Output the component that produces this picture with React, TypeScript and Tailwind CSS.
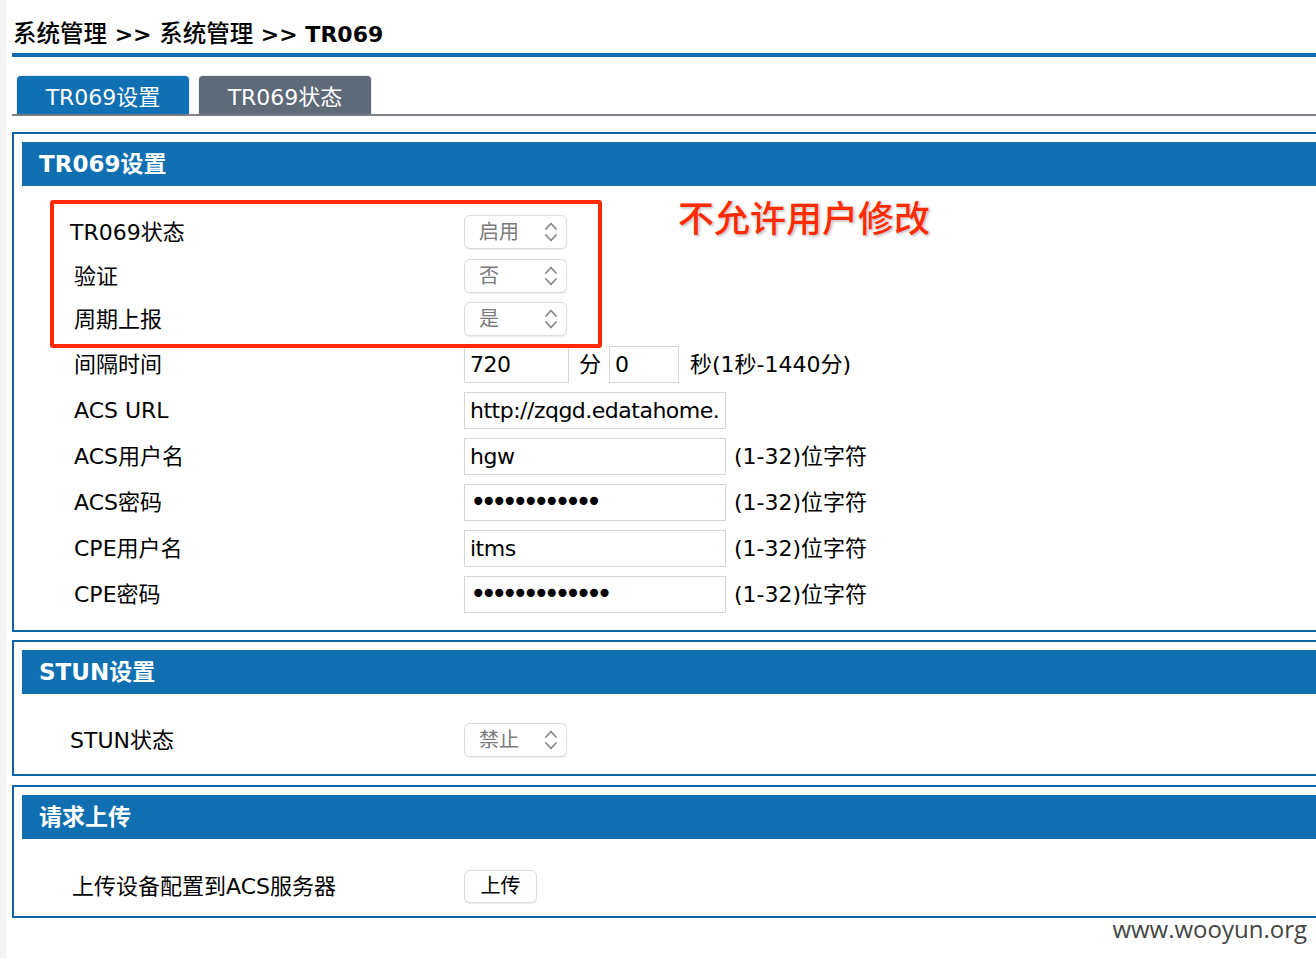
import type { ReactNode } from 'react'

const font = '"DejaVu Sans", "Noto Sans CJK SC", sans-serif'

function UpDown() {
    return (
        <svg width="14" height="24" viewBox="0 0 14 24" fill="none" stroke="#8a8a8a" strokeWidth="1.8" strokeLinecap="round" strokeLinejoin="round">
            <path d="M2 9 L7 3.5 L12 9" />
            <path d="M2 15 L7 20.5 L12 15" />
        </svg>
    )
}

function Select({ value }: { value: string }) {
    return (
        <div className="flex h-[34px] w-[103px] items-center justify-between rounded-[6px] border border-[#dcdcdc] bg-white pl-[14px] pr-[8px] text-[20px] text-[#7a7a7a] shadow-[0_1px_1px_rgba(0,0,0,0.08)]">
            <span>{value}</span>
            <UpDown />
        </div>
    )
}

function TextBox({ width, children }: { width: string; children: ReactNode }) {
    return (
        <div className={`flex h-[37px] items-center overflow-hidden whitespace-nowrap border border-[#d6d6d6] bg-white pl-[5px] text-[22px] tracking-[-0.5px] text-black ${width}`}>
            {children}
        </div>
    )
}

// password mask
function Dots({ n }: { n: number }) {
    return <span className="text-[28px] leading-[20px] tracking-[-6px] text-black">{'•'.repeat(n)}</span>
}

function Row({ label, h = 'h-[46px]', pad = 'pl-[52px]', children }: { label: string; h?: string; pad?: string; children: ReactNode }) {
    return (
        <div className={`flex items-center ${h}`}>
            <div className={`w-[442px] shrink-0 text-[22px] text-black ${pad}`}>{label}</div>
            <div className="flex items-center">{children}</div>
        </div>
    )
}

function Section({ title, body, children }: { title: string; body: string; children: ReactNode }) {
    return (
        <div className="w-[1340px] border-2 border-[#0d64a8] px-[8px] pt-[8px] pr-0">
            <div className="flex h-[44px] items-center bg-[#0f6fb1] pl-[17px] text-[23px] font-bold text-white">{title}</div>
            <div className={body}>{children}</div>
        </div>
    )
}

function Hint() {
    return <span className="ml-[8px] text-[22px] text-black">(1-32)位字符</span>
}

export default function App() {
    return (
        <div className="relative flex min-h-[958px] w-[1316px] overflow-hidden bg-white" style={{ fontFamily: font }}>
            <div className="w-[6px] shrink-0 bg-[#f3f3f3]" />
            <div className="flex-1 pl-[6px]">
                <div className="border-b-4 border-[#0f6db0] pt-[19px] pb-[3px] pl-[1px] text-[23.5px] leading-[30px] text-black">
                    <span className="font-medium">系统管理</span>
                    <span className="text-[22px] font-bold"> &gt;&gt; </span>
                    <span className="font-medium">系统管理</span>
                    <span className="text-[22px] font-bold"> &gt;&gt; TR069</span>
                </div>

                <div className="mt-[19px] flex gap-[10px] border-b-2 border-[#7f8389] pl-[5px]">
                    <div className="flex h-[38px] w-[172px] items-center justify-center rounded-t-[4px] bg-[#1070b4] pt-[4px] text-[22px] text-white shadow-[0_0_2px_rgba(0,0,0,0.25)]">
                        TR069设置
                    </div>
                    <div className="flex h-[38px] w-[172px] items-center justify-center rounded-t-[4px] bg-[#5e6a77] pt-[4px] text-[22px] text-white shadow-[0_0_2px_rgba(0,0,0,0.25)]">
                        TR069状态
                    </div>
                </div>

                <div className="mt-[16px] flex flex-col">
                    <Section title="TR069设置" body="pt-[23px] pb-[13px]">
                        <Row label="TR069状态" pad="pl-[48px]">
                            <Select value="启用" />
                        </Row>
                        <Row label="验证" h="h-[42px]">
                            <Select value="否" />
                        </Row>
                        <Row label="周期上报" h="h-[44px]">
                            <Select value="是" />
                        </Row>
                        <Row label="间隔时间">
                            <TextBox width="w-[105px]">720</TextBox>
                            <span className="ml-[10px] mr-[8px] text-[22px]">分</span>
                            <TextBox width="w-[70px]">0</TextBox>
                            <span className="ml-[11px] text-[22px]">秒(1秒-1440分)</span>
                        </Row>
                        <Row label="ACS URL">
                            <TextBox width="w-[262px]">http://zqgd.edatahome.</TextBox>
                        </Row>
                        <Row label="ACS用户名">
                            <TextBox width="w-[262px]">hgw</TextBox>
                            <Hint />
                        </Row>
                        <Row label="ACS密码">
                            <TextBox width="w-[262px]">
                                <Dots n={12} />
                            </TextBox>
                            <Hint />
                        </Row>
                        <Row label="CPE用户名">
                            <TextBox width="w-[262px]">itms</TextBox>
                            <Hint />
                        </Row>
                        <Row label="CPE密码">
                            <TextBox width="w-[262px]">
                                <Dots n={13} />
                            </TextBox>
                            <Hint />
                        </Row>
                    </Section>

                    <div className="mt-[8px]">
                        <Section title="STUN设置" body="pt-[23px] pb-[11px]">
                            <Row label="STUN状态" pad="pl-[48px]">
                                <Select value="禁止" />
                            </Row>
                        </Section>
                    </div>

                    <div className="mt-[9px]">
                        <Section title="请求上传" body="pt-[24px] pb-[7px]">
                            <Row label="上传设备配置到ACS服务器" pad="pl-[50px]">
                                <div className="flex h-[33px] w-[73px] items-center justify-center rounded-[6px] border border-[#dcdcdc] bg-white text-[20px] text-black shadow-[0_1px_1px_rgba(0,0,0,0.08)]">
                                    上传
                                </div>
                            </Row>
                        </Section>
                    </div>
                </div>
            </div>

            <div
                className="absolute right-[9px] top-[912px] text-[24px] leading-[34px] text-[#444]"
                style={{ fontFamily: '"Open Sans", sans-serif' }}
            >
                www.wooyun.org
            </div>
            <div className="absolute left-[50px] top-[200px] h-[148px] w-[552px] rounded-[3px] border-4 border-[#ff2a00]" />
            <div
                className="absolute left-[678px] top-[193px] text-[36px] font-medium leading-[46px] text-[#ff2a00]"
                style={{ fontFamily: '"Noto Sans CJK SC", sans-serif', textShadow: '0 0 3px #fff, 1px 1px 3px rgba(0,0,0,0.45)' }}
            >
                不允许用户修改
            </div>
        </div>
    )
}
